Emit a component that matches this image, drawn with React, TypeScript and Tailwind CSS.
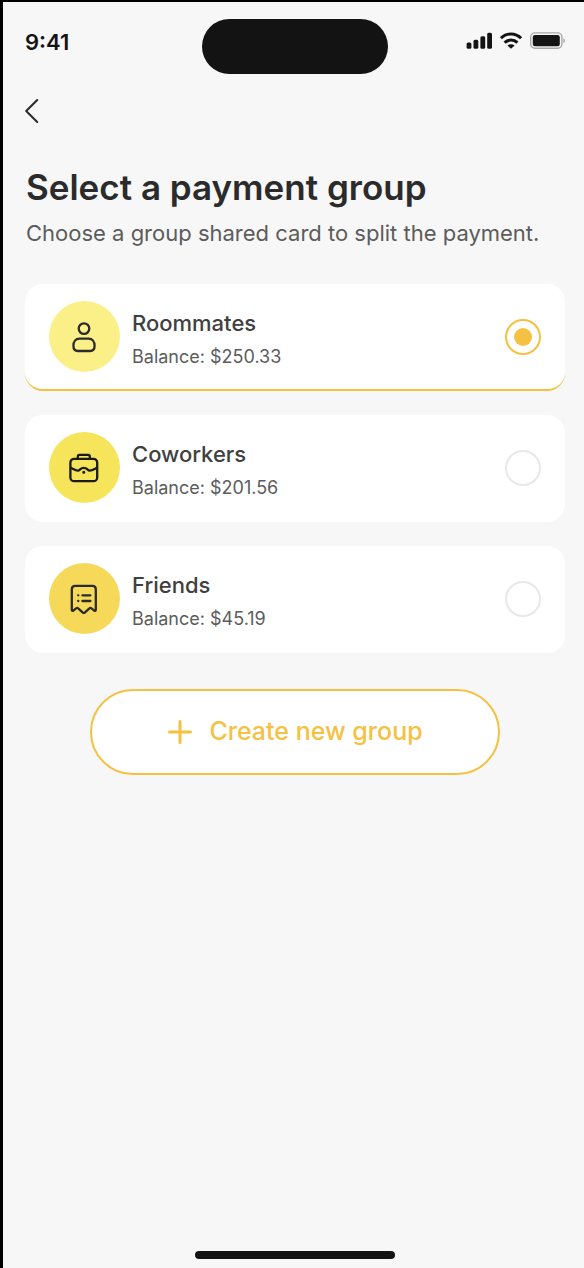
import React, { useState } from 'react';

interface Group {
  id: string;
  name: string;
  balance: string;
  circle: string;
  icon: React.ReactNode;
}

const PersonIcon = () => (
  <svg width="31" height="32" viewBox="0 0 31 32" fill="none" stroke="#2b2b2b" strokeWidth="2.3" aria-hidden="true">
    <circle cx="15" cy="7.6" r="5.3" />
    <path d="M10.4 17.6H19.6C23.4 17.6 25.6 20.6 25.6 24.8C25.6 28.2 24.2 30 21.2 30H8.8C5.8 30 4.4 28.2 4.4 24.8C4.4 20.6 6.6 17.6 10.4 17.6Z" />
  </svg>
);

const BriefcaseIcon = () => (
  <svg width="33" height="32" viewBox="0 0 33 32" fill="none" stroke="#1b1b1b" strokeWidth="2.3" strokeLinecap="round" strokeLinejoin="round" aria-hidden="true">
    <rect x="2.4" y="6.8" width="26.8" height="22.4" rx="3.8" />
    <path d="M9.8 6.5V4.4C9.8 3.2 10.4 2.8 11.4 2.8H20.2C21.2 2.8 21.8 3.2 21.8 4.4V6.5" />
    <path d="M2.8 15.8C5 16.8 7.4 18.6 9.8 18.6C12.4 18.6 12 15.8 15.8 15.8C19.6 15.8 19.2 18.6 21.8 18.6C24.2 18.6 26.8 16.8 29 15.8" />
    <circle cx="15.8" cy="20.3" r="0.7" fill="#1b1b1b" strokeWidth="1.7" />
  </svg>
);

const ReceiptIcon = () => (
  <svg width="33" height="32" viewBox="0 0 33 32" fill="none" stroke="#2b2b2b" strokeWidth="2.3" strokeLinecap="round" strokeLinejoin="round" aria-hidden="true">
    <path d="M3.8 27V6.4C3.8 4.2 5 2.9 7.2 2.9H24.4C26.6 2.9 27.8 4.2 27.8 6.4V27C27.8 28 26.8 28.2 26 27.4L23.2 25.2C22.5 24.6 22 24.7 21.4 25.3L17 29.4C16.2 30.1 15.4 30.1 14.6 29.4L10.2 25.3C9.6 24.7 9.1 24.6 8.4 25.2L5.6 27.4C4.8 28.2 3.8 28 3.8 27Z" />
    <path d="M14.4 12.3H22.4M14.4 18H22.4M10.2 12.3H10.3M10.2 18H10.3" />
  </svg>
);

const groups: Group[] = [
  { id: 'roommates', name: 'Roommates', balance: '$250.33', circle: 'bg-[#fbf088]', icon: <PersonIcon /> },
  { id: 'coworkers', name: 'Coworkers', balance: '$201.56', circle: 'bg-[#f6e55b]', icon: <BriefcaseIcon /> },
  { id: 'friends', name: 'Friends', balance: '$45.19', circle: 'bg-[#f6d959]', icon: <ReceiptIcon /> },
];

const StatusBar = () => (
  <div className="grid grid-cols-[1fr_auto_1fr] items-start pt-[17px]">
    <span className="pt-[9px] text-[22px] leading-7 font-semibold text-[#141414]">9:41</span>
    <div className="h-[55px] w-[186px] rounded-full bg-[#131313]" />
    <div className="flex items-center justify-end gap-2 pt-[13px]">
      {/* Signal */}
      <svg width="26" height="18" viewBox="0 0 26 18" fill="#141414" aria-label="Signal">
        <rect x="0.6" y="10.6" width="4.8" height="6.2" rx="1.5" />
        <rect x="7.5" y="7.8" width="4.8" height="9" rx="1.5" />
        <rect x="14.4" y="4.2" width="4.8" height="12.6" rx="1.5" />
        <rect x="21.2" y="0.8" width="4.8" height="16" rx="1.5" />
      </svg>
      {/* Wifi */}
      <svg width="22" height="18" viewBox="0 0 22 18" fill="none" stroke="#141414" strokeWidth="3.1" aria-label="Wi-Fi">
        <path d="M0.9 6.2C6.4 0.5 15.6 0.5 21.1 6.2" />
        <path d="M4.6 10.6C8.2 7.2 13.8 7.2 17.4 10.6" />
        <path d="M11 16.8L7.4 13.4C9.5 11.7 12.5 11.7 14.6 13.4Z" fill="#141414" stroke="none" />
      </svg>
      {/* Battery */}
      <svg width="35" height="18" viewBox="0 0 35 18" fill="none" aria-label="Battery">
        <rect x="0.7" y="0.9" width="31.2" height="15.4" rx="4.2" stroke="#a9a9a9" strokeWidth="1.4" />
        <rect x="2.8" y="3" width="27" height="11.2" rx="2.2" fill="#141414" />
        <path d="M33.4 6.2C35.4 7.2 35.4 10.2 33.4 11.2Z" fill="#a9a9a9" />
      </svg>
    </div>
  </div>
);

interface GroupCardProps {
  group: Group;
  selected: boolean;
  onSelect: (id: string) => void;
}

const GroupCard: React.FC<GroupCardProps> = ({ group, selected, onSelect }) => (
  <label
    className={`flex cursor-pointer items-center gap-3 rounded-[18px] border-b-2 bg-white px-6 pt-[17px] pb-[17px]
      ${selected ? 'border-[#f5c142]' : 'border-white'}
    `}
  >
    <span className={`flex size-[71px] shrink-0 items-center justify-center rounded-full ${group.circle}`}>
      {group.icon}
    </span>
    <span className="flex min-w-0 flex-1 flex-col gap-1 pt-1">
      <span className="text-[22px] leading-8 font-medium text-[#404040]">{group.name}</span>
      <span className="text-[18px] leading-7 text-[#5c5c5c]">Balance: {group.balance}</span>
    </span>
    <input
      type="radio"
      name="group"
      value={group.id}
      checked={selected}
      onChange={() => onSelect(group.id)}
      className="grid size-9 shrink-0 appearance-none place-items-center rounded-full border-2 border-[#e8e8e8] bg-white checked:border-[#f5c142] checked:before:size-[18px] checked:before:rounded-full checked:before:bg-[#f5c142] checked:before:content-['']"
    />
  </label>
);

export default function App() {
  const [selected, setSelected] = useState('roommates');

  return (
    <div className="flex min-h-screen flex-col border-t-2 border-l-3 border-black bg-[#f7f7f7] pr-[19px] pl-[22px] font-['Inter',sans-serif]">
      <StatusBar />

      <header className="pt-[19px]">
        <button type="button" aria-label="Back" className="flex h-9 w-9 items-center">
          <svg width="14" height="26" viewBox="0 0 14 26" fill="none" stroke="#2b2b2b" strokeWidth="2" strokeLinecap="round" strokeLinejoin="round">
            <path d="M12.2 2L1.2 13L12.2 24" />
          </svg>
        </button>
      </header>

      <main className="flex flex-col">
        <div className="flex flex-col gap-1.5 pt-[34px] pl-px">
          <h1 className="text-[35px] leading-12 font-semibold text-[#2b2b2b]">Select a payment group</h1>
          <p className="text-[22px] leading-8 whitespace-nowrap text-[#5c5c5c]">
            Choose a group shared card to split the payment.
          </p>
        </div>

        <div role="radiogroup" aria-label="Payment group" className="flex flex-col gap-6 pt-[35px]">
          {groups.map((group) => (
            <GroupCard key={group.id} group={group} selected={selected === group.id} onSelect={setSelected} />
          ))}
        </div>

        <button
          type="button"
          className="mt-9 flex h-[86px] w-[410px] max-w-full items-center justify-center gap-4 self-center rounded-full border-2 border-[#f5c142] bg-white text-[25px] font-medium text-[#f5c142]"
        >
          <svg width="26" height="26" viewBox="0 0 26 26" fill="none" stroke="currentColor" strokeWidth="3" strokeLinecap="round" aria-hidden="true">
            <path d="M13 2.5V23.5M2.5 13H23.5" />
          </svg>
          Create new group
        </button>
      </main>

      {/* Home indicator */}
      <div className="mt-auto mb-[9px] h-2 w-[200px] self-center rounded-full bg-[#131313]" />
    </div>
  );
}
